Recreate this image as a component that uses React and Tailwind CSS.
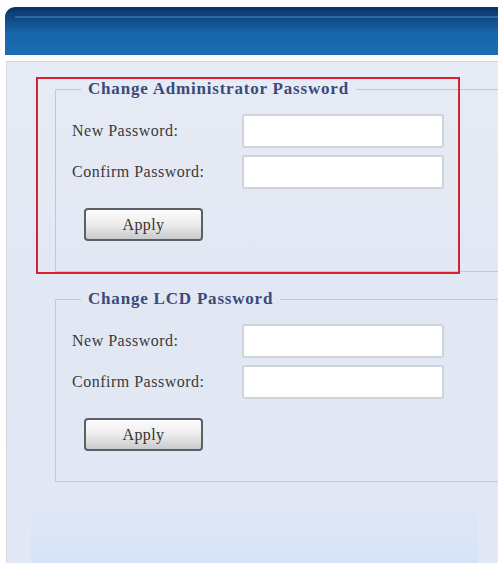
import React from "react";

function PasswordBox({ title }) {
  return (
    <fieldset className="w-[470px] border border-[#c3c8d2] pl-[16px] pt-[15px] pb-[30px]">
      <legend className="ml-[9px] px-[7px] text-[17px] leading-[20px] font-bold text-[#3a4a7c] tracking-[0.8px]">
        {title}
      </legend>
      <div className="flex flex-col gap-[7px]">
        <div className="flex items-center">
          <label className="w-[170px] text-[16px] tracking-[0.5px] text-[#3a3a3a]">New Password:</label>
          <input
            type="password"
            className="w-[202px] h-[34px] bg-white border-2 border-[#cfd3da] rounded-[3px] outline-none"
          />
        </div>
        <div className="flex items-center">
          <label className="w-[170px] text-[16px] tracking-[0.5px] text-[#3a3a3a]">Confirm Password:</label>
          <input
            type="password"
            className="w-[202px] h-[34px] bg-white border-2 border-[#cfd3da] rounded-[3px] outline-none"
          />
        </div>
      </div>
      <button className="mt-[19px] ml-[12px] w-[119px] h-[33px] rounded-[4px] border-2 border-[#5b6068] bg-gradient-to-b from-[#fdfdfd] via-[#ececec] to-[#c9cacc] text-[16px] tracking-[0.4px] text-[#333] shadow-[inset_0_1px_0_#fff]">
        Apply
      </button>
    </fieldset>
  );
}

export default function App() {
  return (
    <div
      className="relative w-[498px] h-[568px] bg-white overflow-hidden"
      style={{ fontFamily: '"Liberation Serif", "Times New Roman", serif' }}
    >
      {/* top banner */}
      <div className="mt-[7px] ml-[5px] h-[48px] rounded-tl-[10px] bg-gradient-to-b from-[#0c3a70] via-[#1765aa] to-[#1b6eb2] border-t-[3px] border-[#0a3466]">
        <div className="mt-[6px] h-[2px] bg-[#3a86c8] opacity-60 ml-[10px]" />
      </div>

      {/* content panel */}
      <div className="mt-[6px] ml-[6px] h-[502px] border-l border-t border-[#d2d7e0] bg-gradient-to-b from-[#e6ebf5] via-[#e2e7f4] to-[#e3e8f6] overflow-hidden flex flex-col">
        <div className="pl-[48px] pt-[17px] flex flex-col gap-[17px]">
          <PasswordBox title="Change Administrator Password" />
          <PasswordBox title="Change LCD Password" />
        </div>
        <div className="mt-auto ml-[24px] mr-[20px] h-[52px] bg-gradient-to-b from-[#dfe7f5] to-[#d6e3f7]" />
      </div>

      {/* highlight annotation */}
      <div className="absolute left-[36px] top-[77px] w-[424px] h-[197px] border-2 border-[#d8202e] pointer-events-none" />
    </div>
  );
}
